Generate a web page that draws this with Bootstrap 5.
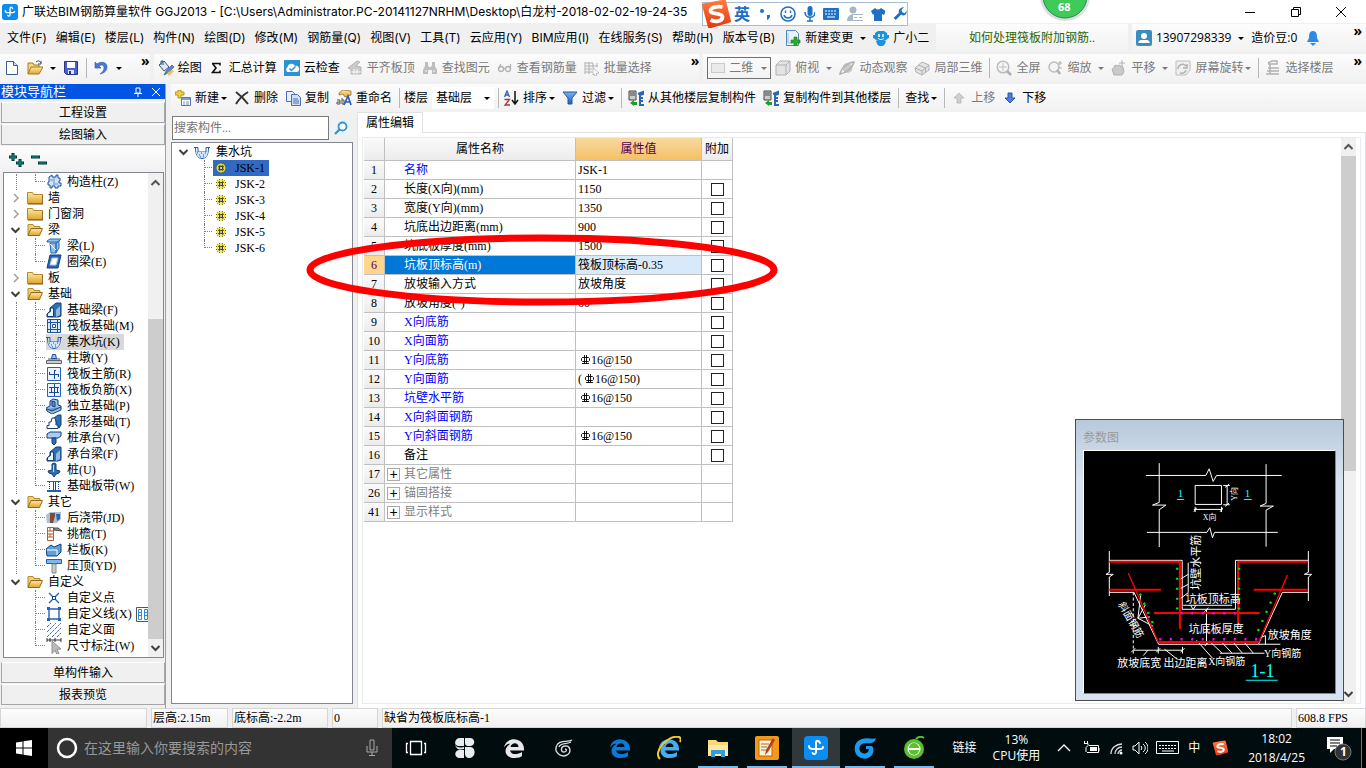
<!DOCTYPE html>
<html lang="zh-CN">
<head>
<meta charset="utf-8">
<meta name="viewport" content="width=device-width, initial-scale=1">
<title>广联达BIM钢筋算量软件 GGJ2013</title>
<link rel="stylesheet" href="https://cdn.jsdelivr.net/npm/bootstrap@5.3.0/dist/css/bootstrap.min.css">
<style>
:root{--line:#c0c0c0;--edge:#828790;--face:#f0f0f0}
body{font:12px/16px "Open Sans","Noto Sans CJK SC",sans-serif;color:#000;background:var(--face);min-height:100vh;overflow:hidden}
.song{font-family:"Liberation Serif","Noto Sans CJK SC",serif}
button{font:inherit;color:inherit;background:none;border:0;padding:0;white-space:nowrap}
.ic{width:16px;height:16px;flex:none;display:block}
.titlebar{height:23px;background:#fff;padding:0 19px 0 2px}
.titlebar .path,.menus{font-family:Inter,"Noto Sans CJK SC",sans-serif}
.winbtn{width:46px;height:23px}
.menubar{height:30px;padding-left:7px}
.menubar .menus{gap:9px;padding-right:10px}
.strip{background:linear-gradient(#fcfcfc,#f1f1f1);height:28px}
.toolrow{height:31px;padding-top:1px}
.tb{display:flex;align-items:center;gap:4px;margin-right:7px;flex:none}
.off{color:#7a7a7a}
.off .ic{filter:grayscale(1);opacity:.75}
.dd::after,.pick::after{content:"";border:3px solid transparent;border-top-color:currentColor;border-bottom:0;width:0;flex:none;margin-left:3px}
.dd.tight::after{margin-left:-2px}
.rule{width:1px;height:20px;background:#b8b8b8;flex:none;margin-right:6px}
.chev{font:bold 14px/10px "Open Sans",sans-serif;align-self:flex-start;padding-top:2px}
.pick{position:relative;display:flex;align-items:center;flex:none}
.pick::after{position:absolute;right:4px;pointer-events:none}
.pick select{appearance:none;border:0;background:#fff;font:inherit;color:inherit;height:22px;padding:0 16px 0 4px;border-radius:0}
.pick.boxed select{border:1px solid #707070;background:transparent;padding-left:21px}
.pick.boxed .ic{position:absolute;left:3px}
.ime{position:absolute;left:702px;top:2px;height:24px;background:#fff;border:1px solid #a9bdd0;width:206px;padding-left:31px;color:#1e70c4;z-index:5}
.ime .logo{position:absolute;left:-3px;top:-3px;width:31px;height:28px}
.ball{position:absolute;left:1038px;top:0;width:54px;height:24px;z-index:5}
.nav-pane{width:166px;flex:none;border-right:1px solid #a0a0a0}
.nav-tools{height:26px}
.pane-cap{background:#0055e5;color:#fff;height:15px;line-height:15px;padding-left:1px;margin-bottom:3px;font-size:13px}
.bar-btn{height:21px;line-height:20px;border:1px solid #a6a6a6;border-top-color:#fff;margin:0 0 1px 1px;text-align:center;background:var(--face)}
.bar-btn:last-child{margin-bottom:3px}
.treebox{border:1px solid var(--edge);background:#fff;min-height:0}
.nav-pane .treebox{margin:0 1px 0 3px}
.treebox ul{list-style:none;margin:0;padding:1px 0 0}
.treebox li{display:flex;align-items:center;height:16px;white-space:nowrap}
.v1{margin-left:12px;width:19px;height:16px;border-left:1px dotted #808080;flex:none}
.v2{width:11px;height:16px;border-left:1px dotted #808080;position:relative;flex:none}
.v2::before{content:"";position:absolute;left:0;right:1px;top:7px;border-top:1px dotted #808080}
.v2.end{height:8px;align-self:flex-start}
.none{border-color:transparent}
.sbar{width:15px;background:#f0f0f0;flex:none}
.sbar .thumb{background:#cdcdcd}
.main-col{margin-left:5px}
.parts-col{width:182px}
.search{padding:4px 0 2px 1px}
.search input{width:157px;height:24px;border:1px solid #7a7a7a;padding:0 1px;color:#000;font:inherit}
.search input::placeholder{color:#757575;opacity:1}
.props{border-collapse:separate;border-spacing:0;width:369px;table-layout:fixed;margin:0 0 0 1px}
.props td,.props th{border-right:1px solid var(--line);border-bottom:1px solid var(--line);height:19px;padding:0 2px;line-height:16px;white-space:nowrap;overflow:hidden}
.props th{background:linear-gradient(#fafafa,#ececec);font-weight:400;text-align:center}
.props thead th{height:23px}
.props thead .hot{background:linear-gradient(#f8d8a0,#f3c164);color:#500050}
.props td.nm{padding-left:19px}
.props td.grp{padding-left:2px;color:#808080}
.props .blue{color:#00f}
.props tr.cur th{background:#ffd58d;color:#500050}
.props tr.cur .nm{background:#0078d7;color:#fff}
.props tr.cur .vl{background:#d8eaf9}
.props input{appearance:none;width:13px;height:13px;border:1px solid #222;background:#fff;margin:0;display:block;border-radius:0}
.props input:checked{background:#0078d7}
.plus{width:13px;height:13px;border:1px solid #aaa;color:#000;line-height:10px;flex:none;margin-right:4px;font-family:"Liberation Sans",sans-serif;font-size:14px}
.ring{position:absolute;left:-51px;top:121px;width:473px;height:74px;z-index:3;pointer-events:none}
.param{position:absolute;right:22px;bottom:7px;width:269px;border:1px solid #4c4c4c;background:linear-gradient(#b9c9da,#d7e3f1 60px);padding:8px 7px 6px;z-index:2}
.param .cap{color:#9a9a9a;height:22px;line-height:20px}
.param svg{display:block;background:#000;width:253px;height:244px;border:1px solid #fff;border-right-color:#888;border-bottom-color:#888}
.status{height:20px}
.status>div{border:1px solid #d5d5d5;height:20px;background:linear-gradient(#fdfdfd,#efefef);line-height:18px;padding-left:1px}
.task{height:40px;background:#010c0f;color:#fff}
.find{width:344px;background:#333;padding:0 13px 0 8px}
.find input{background:none;border:0;outline:0;color:#fff;font:14px/20px "Open Sans","Noto Sans CJK SC",sans-serif}
.find input::placeholder{color:#989898;opacity:1}
.app{width:40px;margin-right:9px;height:40px;display:flex;align-items:center;justify-content:center;flex:none}
.app svg{width:24px;height:24px}
.app.run{border-bottom:2px solid #76b9ed;padding-top:2px}
.app.on{width:48px;margin-left:-4px;margin-right:5px;background:#30383b}
.tray{gap:8px}
</style>
</head>
<body class="d-flex flex-column position-relative">
<svg width="0" height="0" class="position-absolute" aria-hidden="true">
<defs>
<linearGradient id="gy" x2="0" y2="1"><stop stop-color="#ffe9a0"/><stop offset="1" stop-color="#e0a52c"/></linearGradient>
<linearGradient id="gb" x2="0" y2="1"><stop stop-color="#6fb8f5"/><stop offset="1" stop-color="#1c5fb8"/></linearGradient>
<linearGradient id="gr" x2="0" y2="1"><stop stop-color="#ff7a3c"/><stop offset="1" stop-color="#e33a12"/></linearGradient>
</defs>
<symbol id="app" viewBox="0 0 24 24"><rect width="24" height="24" rx="4" fill="#0a8df0"/><path d="M16 7c-1-3-4-3-4 0v9c0 2-2 3-3.500 1M5 10c0 3 2 3 4 3h7c2 0 3 0 3-2" fill="none" stroke="#fff" stroke-width="2" stroke-linecap="round"/></symbol>
<symbol id="new" viewBox="0 0 16 16"><path d="M2.500 1.500h7l4 4v9h-11z" fill="#fff" stroke="#3c5a8c"/><path d="M9.500 1.500v4h4" fill="#cfe0f5" stroke="#3c5a8c"/></symbol>
<symbol id="open" viewBox="0 0 16 16"><path d="M1 14V3h5l1 2h5v3" fill="#f5d67c" stroke="#a87b1c"/><path d="M1 14l3-7h12l-4 7z" fill="url(#gy)" stroke="#a87b1c"/><path d="M9 2c2-2 4-1 5 1m0-2v3h-3" fill="none" stroke="#345"/></symbol>
<symbol id="save" viewBox="0 0 16 16"><path d="M1.500 1.500h13v13h-11l-2-2z" fill="#4a5fd0" stroke="#27348b"/><path d="M4 2h8v6H4z" fill="#fff"/><path d="M5 10h6v4H5z" fill="#dfe4f7"/><path d="M6 11h2v3H6z" fill="#27348b"/></symbol>
<symbol id="undo" viewBox="0 0 16 16"><path d="M2 2v6h6L6 6c3-2 5-1 5 2 0 2-1 4-4 6 5-1 7-4 7-7 0-5-6-6-10-3z" fill="#4a78d8" stroke="#2c55ab" stroke-width=".6"/></symbol>
<symbol id="paint" viewBox="0 0 16 16"><path d="M1 5l5-4 5 6-5 4z" fill="#dfe9f4" stroke="#385577"/><path d="M3 5V1h2v4" fill="none" stroke="#385577"/><path d="M6 15l2-4 6-6 2 2-6 6z" fill="#5b87c6" stroke="#2d4c85" stroke-width=".6"/><path d="M9 13l5-3 2 1-5 5z" fill="#f2c04a"/></symbol>
<symbol id="cloud" viewBox="0 0 16 16"><rect width="16" height="16" fill="#2b93d4"/><path d="M3.500 12a3 3 0 0 1 0-5 4 4 0 0 1 7.500-1 3 3 0 0 1 2 6z" fill="#fff"/><path d="M5.500 8.500l2 2 4-4" fill="none" stroke="#2b93d4" stroke-width="1.500"/></symbol>
<symbol id="slab" viewBox="0 0 16 16"><path d="M1 8l9-7 3 1-4 4 5 1v7H4V9z" fill="#bbb" stroke="#888" stroke-width=".7"/><path d="M4 12h10M7 9v5m3-5v5" stroke="#fff"/></symbol>
<symbol id="bino" viewBox="0 0 16 16"><path d="M3 2h3v3l1 2h2l1-2V2h3v4l2 4v4h-5v-4H6v4H1v-4l2-4z" fill="#aaa"/><path d="M3 11h2m6 0h2" stroke="#fff"/></symbol>
<symbol id="glass" viewBox="0 0 16 16"><g fill="none" stroke="#999" stroke-width="1.300"><circle cx="4" cy="9" r="2.500"/><circle cx="11" cy="9" r="2.500"/><path d="M1.500 9L4 4m2.500 5c1-1 1-1 2 0m5 0V4"/></g></symbol>
<symbol id="batch" viewBox="0 0 16 16"><path d="M1 2v12M1 3h8M1 6h13M1 9h7M1 12h7M5 2v12M9 3v5M13 3v4" stroke="#999" fill="none"/><path d="M9 8l6 5-3 .5 1 2-2 .5-1-2-1 1z" fill="#fff" stroke="#888" stroke-width=".7"/></symbol>
<symbol id="flat" viewBox="0 0 16 16"><rect x="1.500" y="3.500" width="13" height="9" fill="#e6e6e6" stroke="#bbb"/></symbol>
<symbol id="cube" viewBox="0 0 16 16"><path d="M1 5l4-4h10v10l-4 4H1z" fill="#ddd" stroke="#999"/><path d="M1 5h10v10M11 5l4-4" fill="none" stroke="#999"/></symbol>
<symbol id="orbit" viewBox="0 0 16 16"><circle cx="8.500" cy="8" r="5" fill="#bbb"/><path d="M1 14C2 8 9 2 15 2c-1 5-7 11-14 12z" fill="none" stroke="#999" stroke-width="1.500"/></symbol>
<symbol id="part" viewBox="0 0 16 16"><path d="M1 8l7-6 7 3v5l-7 5-6-3z" fill="#ddd" stroke="#999"/><path d="M1 8l7 3v4M8 11l7-6M4.500 5l7 3v4" fill="none" stroke="#999"/></symbol>
<symbol id="full" viewBox="0 0 16 16"><circle cx="7" cy="7" r="5.800" fill="none" stroke="#aaa" stroke-width="1.500"/><path d="M7 3v8M3 7h8" stroke="#aaa"/><path d="M11 11l4 4" stroke="#999" stroke-width="2.500"/></symbol>
<symbol id="zoom" viewBox="0 0 16 16"><circle cx="7" cy="7" r="5" fill="#f4f4f4" stroke="#aaa" stroke-width="1.500"/><path d="M10 10l3 4" stroke="#999" stroke-width="2.500"/><path d="M13 1v4m-2-2h4m-4 5h4" stroke="#999"/></symbol>
<symbol id="hand" viewBox="0 0 16 16"><path d="M3 15l-2-6 2-1 1-3 2 1 2-1 2 1 2 1 1 5-2 3z" fill="#bbb" stroke="#999"/><path d="M11 0v6M8 3h6" stroke="#999"/></symbol>
<symbol id="spin" viewBox="0 0 16 16"><path d="M1 1h14v9l-4 5H1z" fill="#eee" stroke="#aaa"/><path d="M3 9a4.500 4.500 0 0 1 8-3m1-2v4H8M5 13c3 1 6-1 6-3" fill="none" stroke="#999" stroke-width="1.500"/></symbol>
<symbol id="floors" viewBox="0 0 16 16"><path d="M3 3l4-2h5v3H3m0 4h11M2 11h12M1 14h13M5 4v10" fill="none" stroke="#999" stroke-width="1.500"/></symbol>
<symbol id="add" viewBox="0 0 16 16"><path d="M3 0h3v2h3v3H6v3H3V5H0V2h3z" fill="#f4d33c" stroke="#94761b" stroke-width=".7"/><path d="M6.500 7.500h9v8h-9z" fill="#fff" stroke="#5577aa"/><path d="M7 8h8v2H7z" fill="#7aa0dc"/><path d="M8 12h2m1 0h3m-6 2h2m1 0h3" stroke="#6a90c8"/></symbol>
<symbol id="del" viewBox="0 0 16 16"><path d="M2 2c4 3 8 7 12 12M14 2C9 5 5 9 2 14" fill="none" stroke="#333" stroke-width="2"/></symbol>
<symbol id="copy" viewBox="0 0 16 16"><path d="M1.500 1.500h6l2 2v8h-8z" fill="#e6effc" stroke="#4a6fb5"/><path d="M6.500 4.500h6l3 3v8h-9z" fill="#cfe0fb" stroke="#4a6fb5"/><path d="M8 9h5m-5 2h6m-6 2h6" stroke="#4a6fb5"/></symbol>
<symbol id="ren" viewBox="0 0 16 16"><path d="M3 3l4-3 8 1v4l-6 2-2-3-4 1z" fill="url(#gy)" stroke="#8a6414" stroke-width=".7"/><path d="M8 15l4-9 3 9m-6-3h5" fill="none" stroke="#2b5dc0" stroke-width="1.700"/><path d="M1 10h3v4H1v-2h3M6 8v6h2v-4H6" fill="none" stroke="#555"/></symbol>
<symbol id="sort" viewBox="0 0 16 16"><path d="M1.500 7L4 1l2.500 6M2.500 5h3" fill="none" stroke="#3b5db0" stroke-width="1.300"/><path d="M1.500 9.500h5L2 15h5" fill="none" stroke="#a33b3b" stroke-width="1.300"/><path d="M12 1v12m-3-3l3 4 3-4" fill="none" stroke="#111" stroke-width="1.500"/></symbol>
<symbol id="fun" viewBox="0 0 16 16"><path d="M1 2h14l-5 6v6H6V8z" fill="url(#gb)" stroke="#2a5796"/></symbol>
<symbol id="cpf" viewBox="0 0 16 16"><path d="M1 1h7v9H1z" fill="#ccc" stroke="#444"/><path d="M2 3h5M2 5h5" stroke="#444"/><path d="M10 4l5-2v2l-3 1v10h4" fill="none" stroke="#2c66b5" stroke-width="2"/><path d="M11 8h4m-4 3h4" stroke="#2c66b5" stroke-width="2"/><path d="M2 13l4-3v2h3v3H6v1z" fill="#18a028"/></symbol>
<symbol id="up" viewBox="0 0 16 16"><path d="M8 3l5 5h-3v5H6V8H3z" fill="#c4c4c4" stroke="#aaa"/></symbol>
<symbol id="down" viewBox="0 0 16 16"><path d="M8 13l5-5h-3V3H6v5H3z" fill="#4a7ee6" stroke="#2d55a8"/></symbol>
<symbol id="chg" viewBox="0 0 16 16"><path d="M1.500.500h9l3 3v12h-12z" fill="#eaf4ff" stroke="#4d8ac6"/><path d="M3 3v10h4" fill="none" stroke="#8ebfe8"/><path d="M9 7h3v3h3v3h-3v3H9v-3H6v-3h3z" fill="#2faa2b" stroke="#147512" stroke-width=".6"/></symbol>
<symbol id="bot" viewBox="0 0 16 16"><path d="M0 5h2V3l3-2h6l3 2v2h2v3l-2 1c-1 3-11 3-12 0L0 8z" fill="#1a93dc"/><path d="M3 11h10l-1 3-2 2H6l-2-2z" fill="#1a93dc"/><path d="M6 4v3m4-3v3" stroke="#fff" stroke-width="1.500"/><path d="M5 8c1 2 5 2 6 0" fill="none" stroke="#fff"/></symbol>
<symbol id="user" viewBox="0 0 16 16"><rect width="16" height="16" rx="2" fill="#3b8dbd"/><circle cx="8" cy="6" r="3" fill="#fff"/><path d="M2 13c1-4 4-3 6-3s5-1 6 3z" fill="#fff"/></symbol>
<symbol id="bell" viewBox="0 0 16 16"><path d="M8 1c4 0 4 4 4 7l2 4H2l2-4c0-3 0-7 4-7z" fill="#2e8ae8"/><path d="M5 13h6l-3 3z" fill="#2e8ae8"/></symbol>
<symbol id="fold" viewBox="0 0 16 16"><path d="M.500 13.500v-11h5l1 2h9v9z" fill="url(#gy)" stroke="#b58a2b"/><path d="M1 14h15V5" fill="none" stroke="#6e5520"/></symbol>
<symbol id="fopen" viewBox="0 0 16 16"><path d="M1 13.500v-11h5l1 2h6v2" fill="#f2cf73" stroke="#b58a2b"/><path d="M1 13.500l3-7h11.500l-3 7z" fill="url(#gy)" stroke="#8e6a1e"/></symbol>
<symbol id="arD" viewBox="0 0 11 11"><path d="M1.500 3.500l4 4 4-4" fill="none" stroke="#404040" stroke-width="2"/></symbol>
<symbol id="arR" viewBox="0 0 11 11"><path d="M4 1.500l4 4-4 4" fill="none" stroke="#a0a0a0" stroke-width="1.500"/></symbol>
<symbol id="arU" viewBox="0 0 11 11"><path d="M1.500 7.500l4-4 4 4" fill="none" stroke="#555" stroke-width="2"/></symbol>
<symbol id="col" viewBox="0 0 16 16"><path d="M3 3l3-2v2h4V1h2v3h2v3h-1v2h2v3h-3v2H9v-2H6v2H4v-3H2V8h1z" fill="#cfe2fa" stroke="#1d4e9c"/><path d="M8 4v8M4 6h3m2 4h3" stroke="#5f8fd0"/></symbol>
<symbol id="beam" viewBox="0 0 16 16"><path d="M1 3l3-2h11l-3 3H1zM4 5h6v10H5zM10 5l3-2v7l-3 5z" fill="#8fc3ef" stroke="#2667b5"/><path d="M4 6l6 6" stroke="#fff"/></symbol>
<symbol id="ringb" viewBox="0 0 16 16"><path d="M4 1h11l-3 13H1z" fill="#2d62b5" stroke="#123f86"/><path d="M6 4h6l-2 7H4z" fill="#fff" stroke="#a9c8ef"/></symbol>
<symbol id="fbeam" viewBox="0 0 16 16"><path d="M1 15v-3l3-3V6l6-5h5v13l-3 1z" fill="#2f6fb4" stroke="#123f78"/><path d="M1.500 14.500v-3l3-2V6h3v8.500z" fill="#eef6fd" stroke="#123f78"/><path d="M10 8l4-4v9l-4 2z" fill="#8fbbe4"/></symbol>
<symbol id="raft" viewBox="0 0 16 16"><path d="M1.500 1.500h13v13h-13z" fill="#dbe9fb" stroke="#1c4f9c"/><path d="M1 4.500h14M1 11.500h14M4.500 1v14M11.500 1v14" stroke="#1c4f9c"/><path d="M6.500 6.500h3v3h-3z" fill="#fff" stroke="#1c4f9c"/></symbol>
<symbol id="pit" viewBox="0 0 16 16"><path d="M0 3.500h4v4.500h8V3.500h4M1.500 4c0 6 2 10.500 6.500 10.500S14.500 10 14.500 4" fill="none" stroke="#2558b0"/><path d="M2 6v2h12V6c0 5-2 8-6 8S2 11 2 6z" fill="#cfe3fb"/><path d="M3 9h1m3 0h1m3 0h1M5 11h1m3 0h1M6 13h1m2 0h1" stroke="#2558b0"/></symbol>
<symbol id="pier" viewBox="0 0 16 16"><path d="M5.500 8.500l1-4h3l1 4z" fill="#9cc2f0" stroke="#1c4f9c"/><path d="M2 9h12" stroke="#1c4f9c"/><path d="M.500 10.500h15v3H.500z" fill="#ccc" stroke="#666"/></symbol>
<symbol id="rm" viewBox="0 0 16 16"><path d="M1.500 1.500h13v13h-13z" fill="#eaf2fd" stroke="#2460c0"/><path d="M8.500 4v9M3 8.500h10M8 4.500h2M3.500 6v3m9-1v3" stroke="#1b489a"/></symbol>
<symbol id="rn" viewBox="0 0 16 16"><path d="M1.500 1.500h13v13h-13z" fill="#eaf2fd" stroke="#2460c0"/><path d="M8.500 2v12M3 5.500h10M3 10.500h10M5.500 5v5m6-5v5" stroke="#1b489a"/></symbol>
<symbol id="iso" viewBox="0 0 16 16"><path d="M0 10l4-2V3l3-2 5 1v5l3 1v4l-9 4-5-3z" fill="#9cc2ea" stroke="#123f78"/><path d="M6 3v5l3 1V4zM1 11l5 2 9-4" fill="#5c92cc" stroke="#123f78"/></symbol>
<symbol id="stp" viewBox="0 0 16 16"><path d="M8 4l4-3h3v10l-2 3z" fill="#2f6fb4" stroke="#123f78"/><path d="M1 14.500v-3h2V8h2l1-4h3l1 4v3h2v3.500z" fill="#fff" stroke="#123f78"/></symbol>
<symbol id="cap" viewBox="0 0 16 16"><path d="M1 4l3-2h11v4l-3 2H1z" fill="#a9cdf2" stroke="#123f78"/><path d="M6 8h4v5l-2 2-2-2z" fill="#2f6fb4" stroke="#123f78"/></symbol>
<symbol id="pile" viewBox="0 0 16 16"><path d="M6 2l2-1 2 1v6l4 1-1 2-3 1-2 3-2-3-3-1-1-2 4-1z" fill="#2f6fb4" stroke="#123f78"/><path d="M7.500 3v7" stroke="#cfe0f5"/></symbol>
<symbol id="band" viewBox="0 0 16 16"><path d="M1 3.500h14" stroke="#2460c0"/><path d="M1 13h14" stroke="#2460c0" stroke-width="2"/><path d="M3.500 4v9m9-9v9" stroke="#1b489a" stroke-dasharray="1 1"/><path d="M7.500 4v9m2-9v9" stroke="#1b489a"/></symbol>
<symbol id="pour" viewBox="0 0 16 16"><path d="M0 5l4-3h11v7l-4 4H1z" fill="#a9bfe0"/><path d="M4 3h5v3l-2 7H4z" fill="#8a4b2a"/><path d="M10 4h4v5l-3 2z" fill="#2f62ad"/></symbol>
<symbol id="eave" viewBox="0 0 16 16"><path d="M1.500 1.500h6v13h-6zM1 5h7M1 8h7M1 11h7M4 1v4m0 3v3" fill="#fff" stroke="#b9562b"/><path d="M8 2h4l4 3-8-1z" fill="#999" stroke="#444"/></symbol>
<symbol id="rail" viewBox="0 0 16 16"><path d="M0 7l5-4 3 2 7-3v8l-4 4H1z" fill="#5f9fdb" stroke="#123f78"/><path d="M1 8h10v5" fill="none" stroke="#fff"/></symbol>
<symbol id="top" viewBox="0 0 16 16"><path d="M.500 1.500h15v4H.500z" fill="#7db7f3" stroke="#1c62b8"/><path d="M6 6h4v9H6z" fill="#ccc" stroke="#888"/></symbol>
<symbol id="pt" viewBox="0 0 16 16"><path d="M3 3l10 10M13 3L3 13" stroke="#2460c0" stroke-width="1.300"/><path d="M6.500 6.500h3v3h-3z" fill="#fff" stroke="#123f78"/></symbol>
<symbol id="ln" viewBox="0 0 16 16"><path d="M3 3h10v10H3z" fill="none" stroke="#2460c0" stroke-width="1.400"/><path d="M1 1h3v3H1zm11 0h3v3h-3zM1 12h3v3H1zm11 0h3v3h-3z" fill="#2460c0"/></symbol>
<symbol id="ar" viewBox="0 0 16 16"><path d="M1 5l4-4M1 10l9-9M1 15L15 1M6 15l9-9M11 15l4-4" stroke="#3b6ac2" stroke-dasharray="3 .7"/></symbol>
<symbol id="dim" viewBox="0 0 16 16"><path d="M1 0v4m14-4v4M1 2h14M4 0v4m5-4v4" stroke="#333"/><path d="M6 3l9 8-4 .500 2 4-2 1-2-4-3 3z" fill="#bbb" stroke="#777" stroke-width=".7"/></symbol>
<symbol id="gear" viewBox="0 0 16 16"><path d="M6.500 3v10M9.500 3v10M3 6.500h10M3 9.500h10M4.500 4.500l7 7M11.500 4.500l-7 7" stroke="#4a4600"/><circle cx="8" cy="8" r="3.800" fill="none" stroke="#e8df20" stroke-width="1.500"/><path d="M8 4v8M4 8h8" stroke="#e8df20"/><circle cx="8" cy="8" r="1.500" fill="#fff" stroke="#333"/></symbol>
<symbol id="mag" viewBox="0 0 16 16"><rect width="16" height="16" fill="#e9f4fc"/><circle cx="9.500" cy="6.500" r="4" fill="#fff" stroke="#3a8fd6" stroke-width="1.800"/><path d="M6.500 9.500L2 14" stroke="#3a8fd6" stroke-width="2.400"/></symbol>
<symbol id="sg" viewBox="0 0 30 28"><path d="M3 5L24 1l5 20-20 6z" fill="url(#gr)" stroke="url(#gr)" stroke-width="3" stroke-linejoin="round"/><path d="M22 7c-5-1-12 0-12 4s12 1 12 6-8 5-12 3" fill="none" stroke="#fff" stroke-width="3.800"/></symbol>
<symbol id="iee" viewBox="0 0 24 24"><path d="M8 14.500h14c1-14-18-15-20-3C4 8 7 7 8 8c-9 6-3 15 5 14 3 0 6-1 7-2v-4c-5 3-11 3-12-1.500z" fill="currentColor"/><path d="M8.500 11c1-5 8-5 8 0z" fill="#010c0f"/></symbol>
<symbol id="swirl" viewBox="0 0 24 24"><path d="M23 2C19 4 15 1 9 3 2 5 0 12 3 18c4 6 12 6 16 1 2-3 2-7 0-9h-6v3h3c0 5-7 6-9 2-2-5 2-8 6-8 4 1 9 0 10-5z" fill="currentColor"/></symbol>
</svg>

<header class="titlebar d-flex align-items-center">
  <svg class="ic"><use href="#app"/></svg>
  <span class="path text-nowrap ms-1">广联达BIM钢筋算量软件 GGJ2013 - [C:\Users\Administrator.PC-20141127NRHM\Desktop\白龙村-2018-02-02-19-24-35</span>
  <div class="ms-auto d-flex">
    <button class="winbtn" aria-label="最小化"><svg width="12" height="12"><path d="M1 6.500h10" stroke="#000"/></svg></button>
    <button class="winbtn" aria-label="还原"><svg width="12" height="12"><path d="M1.500 3.500h7v7h-7zM3.500 3V1.500h7v7H9" fill="none" stroke="#000"/></svg></button>
    <button aria-label="关闭" class="ps-3"><svg width="12" height="12"><path d="M1 1l10 10M11 1L1 11" stroke="#000"/></svg></button>
  </div>
</header>

<nav class="menubar d-flex align-items-center">
  <div class="menus d-flex">
    <button>文件(F)</button><button>编辑(E)</button><button>楼层(L)</button><button>构件(N)</button><button>绘图(D)</button><button>修改(M)</button><button>钢筋量(Q)</button><button>视图(V)</button><button>工具(T)</button><button>云应用(Y)</button><button>BIM应用(I)</button><button>在线服务(S)</button><button>帮助(H)</button><button>版本号(B)</button>
  </div>
  <button class="tb dd"><svg class="ic"><use href="#chg"/></svg>新建变更</button>
  <button class="tb"><svg class="ic"><use href="#bot"/></svg>广小二</button>
  <div class="strip flex-grow-1 d-flex align-items-center justify-content-center song"><a href="#" class="text-decoration-none" style="color:#2e6400">如何处理筏板附加钢筋..</a></div>
  <div class="strip d-flex align-items-center ms-1 ps-1">
    <button class="tb dd"><svg class="ic"><use href="#user"/></svg>13907298339</button>
    <span class="me-2">造价豆:0</span><button aria-label="通知"><svg class="ic"><use href="#bell"/></svg></button>
    <span class="chev ms-4 ps-2 pe-1">»</span>
  </div>
</nav>

<div class="toolrow d-flex">
  <div class="strip d-flex align-items-center ps-1">
    <button class="tb" aria-label="新建文件"><svg class="ic"><use href="#new"/></svg></button>
    <button class="tb dd" aria-label="打开"><svg class="ic"><use href="#open"/></svg></button>
    <button class="tb" aria-label="保存"><svg class="ic"><use href="#save"/></svg></button>
    <span class="rule"></span>
    <button class="tb dd" aria-label="撤销"><svg class="ic"><use href="#undo"/></svg></button>
    <span class="chev ms-1 ps-2">»</span>
  </div>
  <div class="strip d-flex align-items-center ps-1 ms-1">
    <button class="tb"><svg class="ic"><use href="#paint"/></svg>绘图</button>
    <button class="tb"><svg class="ic" viewBox="0 0 16 16"><path d="M3 3.500h8v2M3.500 3.500L7 8l-3.500 4.500H11v-2" fill="none" stroke="#111" stroke-width="1.600"/></svg>汇总计算</button>
    <button class="tb"><svg class="ic"><use href="#cloud"/></svg>云检查</button>
    <button class="tb off"><svg class="ic"><use href="#slab"/></svg>平齐板顶</button>
    <button class="tb off"><svg class="ic"><use href="#bino"/></svg>查找图元</button>
    <button class="tb off"><svg class="ic"><use href="#glass"/></svg>查看钢筋量</button>
    <button class="tb off"><svg class="ic"><use href="#batch"/></svg>批量选择</button>
    <span class="chev ms-4 ps-2">»</span>
  </div>
  <div class="strip flex-grow-1 d-flex align-items-center ms-1 ps-1">
    <div class="pick boxed off me-1"><svg class="ic"><use href="#flat"/></svg><select aria-label="视图模式"><option>二维</option></select></div>
    <button class="tb off dd"><svg class="ic"><use href="#cube"/></svg>俯视</button>
    <button class="tb off"><svg class="ic"><use href="#orbit"/></svg>动态观察</button>
    <button class="tb off"><svg class="ic"><use href="#part"/></svg>局部三维</button>
    <span class="rule"></span>
    <button class="tb off"><svg class="ic"><use href="#full"/></svg>全屏</button>
    <button class="tb off dd"><svg class="ic"><use href="#zoom"/></svg>缩放</button>
    <button class="tb off dd"><svg class="ic"><use href="#hand"/></svg>平移</button>
    <button class="tb off dd tight"><svg class="ic"><use href="#spin"/></svg>屏幕旋转</button>
    <span class="rule"></span>
    <button class="tb off"><svg class="ic"><use href="#floors"/></svg>选择楼层</button>
    <span class="chev ms-auto pe-1">»</span>
  </div>
</div>

<div class="flex-grow-1 d-flex overflow-hidden">
  <aside class="nav-pane d-flex flex-column song">
    <div class="pane-cap d-flex align-items-center">模块导航栏
      <svg class="ms-auto me-2" width="10" height="10"><path d="M3 1h4v5H3zM1 6.500h8M5 7v3" fill="none" stroke="#fff"/></svg>
      <svg class="me-1" width="10" height="10"><path d="M1 1l8 8M9 1L1 9" stroke="#fff"/></svg>
    </div>
    <button class="bar-btn">工程设置</button>
    <button class="bar-btn">绘图输入</button>
    <div class="nav-tools strip d-flex align-items-center ps-2 gap-1">
      <button aria-label="全部展开"><svg width="18" height="16"><path d="M1 5h8M5 1v8M8 11h8M12 7v8" stroke="#003838" stroke-width="3"/><path d="M2 5h6M5 2v6M9 11h6M12 8v6" stroke="#0a9a8a"/></svg></button>
      <button aria-label="全部折叠"><svg width="18" height="16"><path d="M1 5h9M8 11h9" stroke="#003838" stroke-width="3"/><path d="M2 5h7M9 11h7" stroke="#0a9a8a"/></svg></button>
    </div>
    <div class="treebox flex-grow-1 d-flex justify-content-between">
      <ul id="modules" class="overflow-hidden"></ul>
      <div class="sbar d-flex flex-column align-items-center">
        <svg width="11" height="20"><use href="#arU" width="11" height="20"/></svg>
        <div style="flex:126"></div><div class="thumb w-100" style="flex:321"></div>
        <svg width="11" height="18"><use href="#arD" width="11" height="18"/></svg>
      </div>
    </div>
    <button class="bar-btn mt-1">单构件输入</button>
    <button class="bar-btn">报表预览</button>
  </aside>

  <div class="main-col flex-grow-1 d-flex flex-column">
    <div class="strip d-flex align-items-center ps-1">
      <button class="tb dd tight"><svg class="ic"><use href="#add"/></svg>新建</button>
      <button class="tb"><svg class="ic"><use href="#del"/></svg>删除</button>
      <button class="tb"><svg class="ic"><use href="#copy"/></svg>复制</button>
      <button class="tb"><svg class="ic"><use href="#ren"/></svg>重命名</button>
      <span class="rule me-1"></span>
      <label for="floor" class="me-1 text-nowrap">楼层</label>
      <div class="pick me-1"><select id="floor" style="width:62px"><option>基础层</option></select></div>
      <span class="rule me-1"></span>
      <button class="tb dd tight"><svg class="ic"><use href="#sort"/></svg>排序</button>
      <button class="tb dd tight"><svg class="ic"><use href="#fun"/></svg>过滤</button>
      <span class="rule"></span>
      <button class="tb"><svg class="ic"><use href="#cpf"/></svg>从其他楼层复制构件</button>
      <button class="tb"><svg class="ic"><use href="#cpf"/></svg>复制构件到其他楼层</button>
      <span class="rule"></span>
      <button class="tb dd tight">查找</button>
      <span class="rule"></span>
      <button class="tb off"><svg class="ic"><use href="#up"/></svg>上移</button>
      <button class="tb"><svg class="ic"><use href="#down"/></svg>下移</button>
    </div>
    <div class="flex-grow-1 d-flex">
      <section class="parts-col d-flex flex-column song">
        <div class="search d-flex align-items-center gap-1"><input type="search" aria-label="搜索构件" placeholder="搜索构件..."><button aria-label="搜索"><svg class="ic"><use href="#mag"/></svg></button></div>
        <div class="treebox flex-grow-1 mb-1"><ul id="parts"></ul></div>
      </section>
      <section class="flex-grow-1 bg-white position-relative d-flex flex-column ms-1 song" id="editor">
        <div class="d-flex">
          <div class="px-2 border border-bottom-0" style="height:21px;line-height:20px">属性编辑</div>
          <div class="flex-grow-1 border-bottom"></div>
        </div>
        <div class="flex-grow-1 d-flex justify-content-between border-start border-end pb-1 px-1 pt-1">
          <div class="flex-grow-1 d-flex justify-content-between border border-secondary-subtle">
          <table class="props align-self-start">
            <colgroup><col style="width:21px"><col style="width:191px"><col style="width:126px"><col style="width:31px"></colgroup>
            <thead><tr><th></th><th>属性名称</th><th class="hot">属性值</th><th>附加</th></tr></thead>
            <tbody id="rows"></tbody>
          </table>
          <div class="sbar d-flex flex-column align-items-center me-1">
            <svg width="11" height="18"><use href="#arU" width="11" height="18"/></svg>
            <div class="thumb w-100" style="flex:314"></div><div style="flex:214"></div>
            <svg width="11" height="18"><use href="#arD" width="11" height="18"/></svg>
          </div>
          </div>
        </div>
        <svg class="ring" viewBox="0 0 473 74"><ellipse cx="236" cy="37" rx="232" ry="32" fill="none" stroke="#f00" stroke-width="7"/></svg>
        <div class="param">
          <div class="cap">参数图</div>
          <svg viewBox="42 108 754 726" font-family="Liberation Serif, Noto Sans CJK SC, serif" font-size="33" fill="#fff">
            <g fill="none" stroke="#fff" stroke-width="3">
              <path d="M228 181h180l10-20 12 38 10-18h196M231 352h180l9-14 8 30 6-16h190M268 144v118l-20 8h40l-20 14v112M589 147v118l-18 8h40l-22 12v110"/>
              <path d="M376 211h79v57h-79zM460 211h20M460 269h20M472 211v58M376 275v16M455 275v16M372 283h86M372 290l8-12M451 290l8-12M466 217l12-10M466 274l12-10"/>
              <path d="M118 408v64l-10 6h22l-12 8v57M716 408v64l-12 6h22l-10 8v72"/>
              <path d="M118 436h219v147h160V436h219M118 532h74l74 156h300l72-156h78M566 688h66M410 583v105M404 590l12-12M404 694l12-12M340 571h147M362 571l8 12 8-12"/>
              <path d="M190 532v184" stroke-dasharray="9 7"/>
              <path d="M190 706h148M265 696v20M338 696v20M184 712l12-12M259 712l12-12M332 712l12-12M355 443v90l-26 20M355 478l-26 16M355 508l-26 14M322 733l-38-30M234 706l-14 16M204 610l8-68M204 610l22-40M204 610l46 24M204 610l36-4M380 676l48 54M418 678l38 36M452 678l34 36M487 678l30 36M520 678l30 36M450 715h134M573 668l14-6v26"/>
            </g>
            <g fill="none" stroke="red" stroke-width="6">
              <path d="M118 440h212v202M714 440H505v200M118 524h155M552 524h162M252 594h318M266 681h300"/><path d="M175 474l90 208M653 480l-86 202" stroke-width="4"/>
            </g>
            <g fill="none" stroke="#0e0" stroke-width="7" stroke-dasharray="6 24"><path d="M322 458v130M508 458v130M210 536l48 110M616 533l-60 134"/></g>
            <path d="M268 673h300M332 595h180" fill="none" stroke="#f0f" stroke-width="7" stroke-dasharray="6 26"/>
            <g fill="#0ff"><text x="324" y="247">1</text><text x="525" y="247">1</text><text x="542" y="785" font-size="54">1-1</text><path d="M321 252h22v3h-22zM522 252h24v3h-24zM528 795h96v3h-96z"/></g>
            <text x="399" y="315" font-size="24">X向</text><text transform="translate(503 257) rotate(-90)" font-size="24">Y向</text>
            <text transform="translate(391 524) rotate(-90)">坑壁水平筋</text>
            <text x="348" y="565">坑板顶标高</text><text x="357" y="654">坑底板厚度</text><text x="594" y="672">放坡角度</text>
            <text x="583" y="726" font-size="30">Y向钢筋</text><text x="142" y="756">放坡底宽</text><text x="281" y="756">出边距离</text><text x="415" y="751" font-size="30">X向钢筋</text>
            <text transform="translate(144 568) rotate(60)" font-size="30">斜面钢筋</text>
          </svg>
        </div>
      </section>
    </div>
  </div>
</div>

<footer class="status d-flex gap-1 song">
  <div style="width:147px"></div><div style="width:77px">层高:2.15m</div><div style="width:96px">底标高:-2.2m</div><div style="width:46px">0</div><div class="flex-grow-1">缺省为筏板底标高-1</div><div style="width:70px">608.8 FPS</div>
</footer>

<div class="task d-flex">
  <button class="bg-black" style="width:48px" aria-label="开始"><svg width="16" height="16"><path d="M0 2.500l6.500-1v6H0zM7.500 1.300L16 0v7.500H7.500zM0 8.500h6.500v6L0 13.500zM7.500 8.500H16V16l-8.500-1.300z" fill="#fff"/></svg></button>
  <div class="find d-flex align-items-center gap-1">
    <svg width="22" height="22"><circle cx="11" cy="11" r="9" fill="none" stroke="#fff" stroke-width="2.500"/></svg>
    <input class="flex-grow-1" aria-label="搜索" placeholder="在这里输入你要搜索的内容">
    <svg width="14" height="18"><path d="M5 1h4v10H5zM2 7v6h10V7M7 13v4M4 16.500h6" fill="none" stroke="#aaa"/></svg>
  </div>
  <button class="app ms-1" aria-label="任务视图"><svg viewBox="0 0 24 24"><path d="M6.500 5.500h11v13h-11zM4 7.500H2.500v9H4M20 7.500h1.500v9H20" fill="none" stroke="#fff" stroke-width="1.300"/></svg></button>
  <button class="app" aria-label="应用"><svg viewBox="0 0 24 24" fill="#e8eef0"><path d="M7 2h4v8H5C0 9 2 2 7 2zM12 2h5c5 0 6 7 1 8h-3c-2 0-3-1-3-3zM11 14v8H6c-5-1-5-7 0-8zM12 11h6c5 1 5 10-1 11-4 0-5-2-5-5zM2 8c1 4 5 4 9 3v2c-4 1-8 1-9-5z"/></svg></button>
  <button class="app" aria-label="浏览器" style="color:#e8e8e8"><svg><use href="#iee"/></svg></button>
  <button class="app" aria-label="广联达"><svg viewBox="0 0 24 24"><path d="M21 4c-4 3-12-1-15 5-4 7 4 13 10 10 5-3 3-10-2-9-4 0-5 6-1 6 3 0 3-3 1-3M20 6c-5 3-10 0-12 5" fill="none" stroke="#ddd" stroke-width="1.400"/></svg></button>
  <button class="app ms-2" aria-label="Edge" style="color:#0a7ad8"><svg><use href="#iee"/></svg></button>
  <button class="app" aria-label="Internet Explorer" style="color:#45aef0"><svg viewBox="0 0 24 24"><use href="#iee"/><path d="M3 23C-5 16 12-2 22 1c2 1 2 3 1 5" fill="none" stroke="#f2c929" stroke-width="2"/></svg></button>
  <button class="app run" aria-label="文件资源管理器"><svg viewBox="0 0 24 24"><path d="M2 4h8l2 2h10v14H2z" fill="#f9d977"/><path d="M2 9h20v11H2z" fill="#fde9a4"/><path d="M5 21v-7h14v7h-4v-3H9v3z" fill="#2f9fe0"/></svg></button>
  <button class="app run" aria-label="记事本"><svg viewBox="0 0 24 24"><rect width="24" height="24" rx="2" fill="#ef9a1a"/><path d="M4 4h13v16H4z" fill="#fff5d8" stroke="#c55d12"/><path d="M6 8h8M6 11h6M6 14h5" stroke="#a66a2c"/><path d="M20 4l-7 12-3 3 1-5 7-12z" fill="#b3411c"/></svg></button>
  <button class="app run on" aria-label="GGJ2013"><svg><use href="#app"/></svg></button>
  <button class="app run" aria-label="广联达G" style="color:#1d9bf0"><svg><use href="#swirl"/></svg></button>
  <button class="app run" aria-label="360浏览器"><svg viewBox="0 0 24 24"><circle cx="12" cy="13" r="10" fill="#5cbf30"/><circle cx="12" cy="13" r="6.500" fill="#fff"/><path d="M7 12a5 5 0 0 1 10 0zM7 14h10a5 5 0 0 1-10 0z" fill="#5cbf30"/><path d="M14 3c2-2 5-3 8-1" stroke="#5cbf30" stroke-width="2" fill="none"/></svg></button>
  <div class="tray flex-grow-1 d-flex align-items-center justify-content-end">
    <span class="me-2">链接</span>
    <span class="text-center me-2">13%<br>CPU使用</span>
    <svg class="ic me-1" viewBox="0 0 16 16"><path d="M2 11l6-6 6 6" fill="none" stroke="#fff" stroke-width="1.300"/></svg>
    <svg class="ic" viewBox="0 0 16 16"><path d="M3.500 1v2M.500 1v2M0 3.500h4v2l-2 2V12M5 5.500h9.500v7H3M15 8v3" fill="none" stroke="#fff"/><path d="M6 7h7v4H6z" fill="#fff"/></svg>
    <svg class="ic" viewBox="0 0 16 16"><path d="M3 14C3 8 8 4 14 4M7 14c0-4 3-7 7-7M10 14c0-2 2-4 4-4" fill="none" stroke="#ddd" stroke-width="1.300"/><circle cx="13" cy="13" r="1.500" fill="#fff"/></svg>
    <svg class="ic" viewBox="0 0 16 16"><path d="M1 6h2l4-4v12L3 10H1zM9 6c1 1 1 3 0 4M11 4c3 2 3 6 0 8M13 2c4 3 4 9 0 12" fill="none" stroke="#fff"/></svg>
    <svg width="24" height="14"><path d="M.500.500h22v12H.500z" fill="none" stroke="#fff"/><path d="M3 4.500h18M3 7.500h18" stroke="#fff" stroke-dasharray="2 1"/><path d="M6 10h12" stroke="#fff"/></svg>
    <span>中</span>
    <svg class="ic mx-1" viewBox="0 0 30 28"><use href="#sg" width="30" height="28"/></svg>
    <span class="text-center ms-2" style="line-height:19px">18:02<br>2018/4/25</span>
    <button class="mx-2 ps-1" aria-label="操作中心"><svg width="28" height="28"><path d="M2 3h16v12h-9l-4 4v-4H2z" fill="#fff"/><path d="M5 6h10M5 9h10M5 12h7" stroke="#000"/><circle cx="18" cy="18" r="8" fill="#333" stroke="#777"/><text x="15" y="22" font-size="12" font-weight="700" fill="#fff">1</text></svg></button>
  </div>
  <div class="bg-black border-start border-secondary" style="width:5px"></div>
</div>

<div class="ime d-flex align-items-center gap-2">
  <svg class="logo"><use href="#sg"/></svg>
  <b class="fs-6 lh-1">英</b>
  <svg width="14" height="14"><circle cx="4" cy="4" r="2" fill="#1e70c4"/><path d="M9 8h3c0 3-1 4-3 5" fill="#1e70c4"/></svg>
  <svg class="ic" viewBox="0 0 16 16"><circle cx="8" cy="8" r="7" fill="none" stroke="#1e70c4" stroke-width="1.600"/><path d="M4 9c1 4 7 4 8 0M5.500 4.500v2.500m5-2.500v2.500" fill="none" stroke="#1e70c4" stroke-width="1.400"/></svg>
  <svg width="12" height="16"><rect x="3.500" width="5" height="10" rx="2.500" fill="#1e70c4"/><path d="M1 6c0 7 10 7 10 0M6 11v4M3 15h6" fill="none" stroke="#1e70c4" stroke-width="1.500"/></svg>
  <svg width="16" height="13"><rect width="16" height="12" rx="1" fill="#1e70c4"/><path d="M2 3h12M2 6h12" stroke="#fff" stroke-dasharray="2 1"/><path d="M4 9h8" stroke="#fff"/></svg>
  <svg width="17" height="16"><circle cx="6" cy="4" r="3.500" fill="#a9b6c6"/><path d="M0 15c0-9 12-9 12 0z" fill="#a9b6c6"/><path d="M5.500 8.500h11v6h-11z" fill="#fff" stroke="#a9b6c6"/><path d="M7 11.500h3m2 0h3" stroke="#a9b6c6"/></svg>
  <svg width="15" height="14"><path d="M4 1c2 2 4 2 6 0l5 3-2 4-2-1v7H3V7L2 8 0 4z" fill="#1e70c4"/></svg>
  <svg width="14" height="16" viewBox="0 0 16 16"><path d="M2 14l8-8" stroke="#1e70c4" stroke-width="3.500"/><path d="M13 0l-3 3 1 3 3 1 2-3c1 4-3 7-6 5L7 6c-1-3 2-6 6-6z" fill="#1e70c4"/></svg>
</div>
<svg class="ball" viewBox="0 0 54 24"><circle cx="27" cy="-4" r="25" fill="#ddd"/><circle cx="27" cy="-4" r="22" fill="#3fca5a" stroke="#23865c" stroke-width="1"/><text x="20" y="11" font-size="11" font-weight="700" fill="#fff">68</text></svg>

<script>
const icon = (id, w = 16) => `<svg class="ic" style="width:${w}px"><use href="#${id}"/></svg>`;
// [label, icon] are leaves; [label, state, children] are groups
const modules = [
  ['墙', 'shut', []], ['门窗洞', 'shut', []],
  ['梁', 'open', [['梁(L)', 'beam'], ['圈梁(E)', 'ringb']]],
  ['板', 'shut', []],
  ['基础', 'open', [['基础梁(F)', 'fbeam'], ['筏板基础(M)', 'raft'], ['集水坑(K)', 'pit'], ['柱墩(Y)', 'pier'], ['筏板主筋(R)', 'rm'], ['筏板负筋(X)', 'rn'], ['独立基础(P)', 'iso'], ['条形基础(T)', 'stp'], ['桩承台(V)', 'cap'], ['承台梁(F)', 'fbeam'], ['桩(U)', 'pile'], ['基础板带(W)', 'band']]],
  ['其它', 'open', [['后浇带(JD)', 'pour'], ['挑檐(T)', 'eave'], ['栏板(K)', 'rail'], ['压顶(YD)', 'top']]],
  ['自定义', 'open', [['自定义点', 'pt'], ['自定义线(X)', 'ln'], ['自定义面', 'ar'], ['尺寸标注(W)', 'dim']]]
];
const leaf = ([t, ic], end, last) => {
  const sel = t === '集水坑(K)';
  const extra = t === '自定义线(X)' ? '<svg class="flex-shrink-0" width="14" height="15"><path d="M.500.500h13v14H.500z" fill="#fff" stroke="#555"/><path d="M2.500 2.500h3v10h-3zM8.500 2.500h3v10h-3zM3 5.500h2m-2 3h2m4-3h2m-2 3h2" fill="none" stroke="#2a8ae0"/></svg>' : '';
  return `<li><span class="v1${last ? ' none' : ''}"></span><span class="v2${end ? ' end' : ''}"></span><span class="d-flex pe-1" style="background:${sel ? '#d9d9d9' : 'none'}">${icon(ic)}<span style="margin-left:5px">${t}</span></span>${extra}</li>`;
};
let html = leaf(['构造柱(Z)', 'col'], true, false);
modules.forEach(([t, state, kids], i) => {
  const open = state === 'open';
  html += `<li><span style="margin-left:6px">${icon(open ? 'arD' : 'arR', 11)}</span><span style="width:6px"></span>${icon(open ? 'fopen' : 'fold')}<span style="margin-left:5px">${t}</span></li>`;
  kids.forEach((k, j) => html += leaf(k, j === kids.length - 1, i === modules.length - 1));
});
document.getElementById('modules').innerHTML = html;

html = `<li><span style="margin-left:6px">${icon('arD', 11)}</span><span style="width:5px"></span>${icon('pit')}<span style="margin-left:6px">集水坑</span></li>`;
for (let i = 1; i <= 6; i++) html += `<li><span style="width:32px"></span><span class="v2${i === 6 ? ' end' : ''}" style="width:9px"></span><span class="d-flex pe-1" style="background:${i === 1 ? '#316ac5' : 'none'}">${icon('gear')}<span style="margin-left:6px">JSK-${i}</span></span></li>`;
document.getElementById('parts').innerHTML = html;

// row number, name, value, colour class
const rows = [
  [1, '名称', 'JSK-1', 'blue'], [2, '长度(X向)(mm)', '1150'], [3, '宽度(Y向)(mm)', '1350'], [4, '坑底出边距离(mm)', '900'],
  [5, '坑底板厚度(mm)', '1500'], [6, '坑板顶标高(m)', '筏板顶标高-0.35'], [7, '放坡输入方式', '放坡角度'], [8, '放坡角度(°)', '60'],
  [9, 'X向底筋', '', 'blue'], [10, 'X向面筋', '', 'blue'], [11, 'Y向底筋', 'R16@150', 'blue'], [12, 'Y向面筋', '(R16@150)', 'blue'],
  [13, '坑壁水平筋', 'R16@150', 'blue'], [14, 'X向斜面钢筋', '', 'blue'], [15, 'Y向斜面钢筋', 'R16@150', 'blue'], [16, '备注', ''],
  [17, '其它属性', '', 'grp'], [26, '锚固搭接', '', 'grp'], [41, '显示样式', '', 'grp']
];
const bar = '<svg width="10" height="10" style="vertical-align:-1px" role="img" aria-label="三级钢"><path d="M3.500 0v9M5.500 0v9M1.500 2.500h6l1 1v2l-1 1h-6l-1-1v-2zM1 8.500h7" fill="none" stroke="#000" stroke-width=".9"/></svg>';
document.getElementById('rows').innerHTML = rows.map(([n, name, val, cls]) => {
  const grp = cls === 'grp';
  const v = val.startsWith('R') ? '&nbsp;' + val.replace('R', bar) : val.replace('(R', '( ' + bar);
  const first = grp ? `<td class="grp"><div class="d-flex align-items-center"><button class="plus" aria-label="展开">+</button>${name}</div></td>` : `<td class="nm ${cls || ''}">${name}</td>`;
  const box = n > 1 && !grp ? `<input type="checkbox" class="mx-auto" aria-label="附加 ${name}">` : '';
  return `<tr class="${n === 6 ? 'cur' : ''}"><th scope="row">${n}</th>${first}<td class="vl">${v}</td><td>${box}</td></tr>`;
}).join('');
</script>
<script src="https://cdn.jsdelivr.net/npm/bootstrap@5.3.0/dist/js/bootstrap.bundle.min.js"></script>
</body>
</html>
